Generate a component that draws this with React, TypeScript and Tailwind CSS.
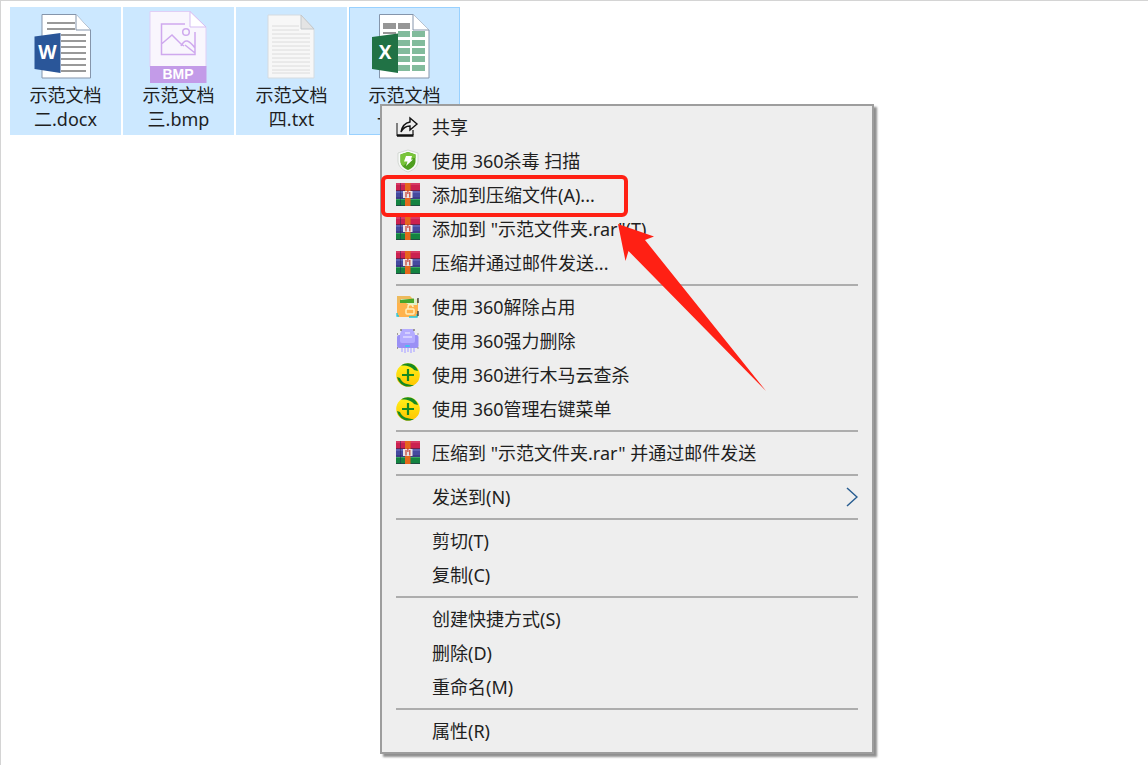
import type { ReactNode } from "react";

type DesktopFile = {
  name: string;
  icon: ReactNode;
  focused?: boolean;
};

type MenuItem = {
  label: string;
  icon?: ReactNode;
  submenu?: boolean;
  highlighted?: boolean;
};

function WordIcon() {
  return (
    <svg viewBox="0 0 72 72" className="size-[72px]" aria-hidden="true">
      <path d="M12 3.500H46L60.500 19V67H12Z" fill="#fff" stroke="#8595ab" />
      <path d="M46 3.500V19H60.500" fill="#fff" stroke="#8595ab" />
      <path
        d="M17 12H45M17 18H45M31 24H56M31 30H56M31 36H56M31 42H56M31 48H56M31 54H56M31 60H56"
        stroke="#999"
        strokeWidth="2"
      />
      <path d="M4.500 25.500L30.500 22V62L4.500 58Z" fill="#2a5699" />
      <text x="17.500" y="48" textAnchor="middle" fill="#fff" fontSize="19" fontWeight="700" fontFamily="Open Sans, sans-serif">
        W
      </text>
    </svg>
  );
}

function BmpIcon() {
  return (
    <svg viewBox="0 0 72 72" className="size-[72px]" aria-hidden="true">
      <path d="M7 .5H47L63 16V56H7Z" fill="#f9f6fd" stroke="#e0cff6" />
      <path d="M47 .5V16H63Z" fill="#fff" stroke="#d5bdf3" />
      <rect x="7" y="55" width="56.500" height="17" fill="#c39be8" />
      <path
        d="M42 13H18.500V43.500H52V21M18.500 33L29 24L38 33L41 35M38 35C42 27 46 29 52 37M42 34L52 42"
        fill="none"
        stroke="#cfa9ee"
        strokeWidth="1.500"
      />
      <circle cx="43" cy="21" r="3.300" fill="none" stroke="#cfa9ee" strokeWidth="1.500" />
      <text x="35" y="68" textAnchor="middle" fill="#fff" fontSize="14" fontWeight="700" fontFamily="Liberation Sans, sans-serif">
        BMP
      </text>
    </svg>
  );
}

function TextIcon() {
  return (
    <svg viewBox="0 0 72 72" className="size-[72px]" aria-hidden="true">
      <path d="M12 4H45L58 18V67H12Z" fill="#f7f7f7" stroke="#d5dbe0" />
      <path
        d="M16 15H43M16 19H43M16 23H54M16 27H54M16 31H54M16 35H54M16 39H54M16 43H54M16 47H54M16 51H54M16 55H54M16 59H54M16 62H54"
        stroke="#dcdcdc"
      />
      <path d="M45 4V18H58Z" fill="#e4e4e4" stroke="#c3c8cc" />
    </svg>
  );
}

function ExcelIcon() {
  return (
    <svg viewBox="0 0 72 72" className="size-[72px]" aria-hidden="true">
      <path d="M10.500 3.500H44L60 19V67H10.500Z" fill="#fff" stroke="#8595ab" />
      <path d="M44 3.500V19H60" fill="#fff" stroke="#8595ab" />
      <path d="M14 15H27M29 15H41" stroke="#969696" strokeWidth="6" />
      <path d="M14 22H27" stroke="#969696" strokeWidth="2" />
      <path
        d="M29 23H41M43 23H56M29 32H41M43 32H56M29 40H41M43 40H56M29 48H41M43 48H56M29 57H41M43 57H56"
        stroke="#82bb9c"
        strokeWidth="6"
      />
      <path d="M3 26L29 22.500V62L3 58Z" fill="#207245" />
      <text x="16" y="48" textAnchor="middle" fill="#fff" fontSize="19" fontWeight="700" fontFamily="Open Sans, sans-serif">
        X
      </text>
    </svg>
  );
}

function ShareIcon() {
  return (
    <svg viewBox="0 0 24 24" className="size-6" fill="none" stroke="#111" aria-hidden="true">
      <path d="M1 8V21" strokeWidth="1" />
      <path d="M1 20.500H17.500" strokeWidth="2.500" />
      <path d="M17 20V15" strokeWidth="1.200" />
      <path d="M5 17C6 11 9 8 14 7V3L21 9L14 15V11C10 11 7 13 5 17Z" strokeWidth="1.400" />
    </svg>
  );
}

function ShieldIcon() {
  return (
    <svg viewBox="0 0 24 24" className="size-6" aria-hidden="true">
      <path d="M12 1L22 4V12C22 17 18 21 12 23C6 21 2 17 2 12V4Z" fill="#f8faf8" stroke="#c6cbc6" strokeWidth=".7" />
      <path d="M12 3L19.500 5.500V12C19.500 16 17 19 12 21C7 19 4.500 16 4.500 12V5.500Z" fill="#4f9f20" />
      <path d="M12 3L19.500 5.500V9C15 8 11 14 7 17C5 15 4.500 14 4.500 12V5.500Z" fill="#79c43a" />
      <path d="M10 7H16L15 10.500H17L10 17L11.500 12.500H8Z" fill="#fff" />
    </svg>
  );
}

function RarIcon() {
  return (
    <svg viewBox="0 0 24 24" className="size-6" aria-hidden="true">
      <rect width="24" height="8" fill="#cb2150" />
      <rect y="8" width="24" height="8" fill="#454a9f" />
      <rect y="16" width="24" height="7" fill="#148341" />
      <path d="M0 1H24" stroke="#e35378" />
      <path d="M0 9H24" stroke="#747bc9" />
      <path d="M0 16.500H24" stroke="#38a762" />
      <path d="M0 7.500H24M0 15H24M0 22.500H24" stroke="#292342" strokeOpacity=".55" />
      <path d="M4.500 0V23" stroke="#1f2355" strokeOpacity=".45" />
      <rect x="9" width="5.500" height="23" fill="#e5681d" />
      <rect x="7" y="8" width="9.500" height="7" fill="#e9e4e8" />
      <path d="M10 9V14.500M13.800 9V14.500M11.900 7V11" stroke="#c63c30" strokeWidth="1.200" fill="none" />
    </svg>
  );
}

function FolderUnlockIcon() {
  return (
    <svg viewBox="0 0 24 24" className="size-6" aria-hidden="true">
      <path d="M1 1H14L17 4H22V22H2L1 20Z" fill="#edba5d" />
      <path d="M5 4H21V10H5Z" fill="#dff1cb" />
      <path d="M4 5L18 3.500V8H4Z" fill="#48a62c" />
      <path d="M1 8H10L13 10H22V22H2L1 20Z" fill="#ffb24c" />
      <path d="M1 18V21H3M21 19V22H13" fill="none" stroke="#20c7df" strokeWidth="1.300" />
      <path d="M22 3V8M22 16V21" stroke="#282828" strokeWidth="1.200" />
      <path d="M12 14V12A2.500 2.500 0 0 1 17 12" fill="none" stroke="#fff0bc" strokeWidth="1.500" />
      <rect x="10" y="14" width="8" height="5" rx="1" fill="none" stroke="#fff0bc" strokeWidth="1.500" />
    </svg>
  );
}

function ShredderIcon() {
  return (
    <svg viewBox="0 0 24 24" className="size-6" aria-hidden="true">
      <rect x="1" y="6" width="21.500" height="13" rx="2" fill="#9a90f5" />
      <path d="M6 0H17L19 5V12Q19 14 17 14H6Q4 14 4 12V5Z" fill="#b4acff" />
      <path d="M9 4H14M7 8H16" stroke="#dedaff" strokeWidth="1.500" />
      <rect x="9" y="16" width="5" height="2" rx="1" fill="#43bef2" />
      <path d="M6 19V23M9 19V24M12 19V23M15 19V24M18 19V23" stroke="#bcb6ff" strokeWidth="1.500" />
      <path d="M1 5H2M4 1H6M17 1H19M21.500 5H22.500M1 19H2M21.500 19H22.500" stroke="#524a3d" />
    </svg>
  );
}

function SafeguardIcon() {
  return (
    <svg viewBox="0 0 24 24" className="size-6" aria-hidden="true">
      <defs>
        <linearGradient id="safeguard" x2="0" y2="1">
          <stop stopColor="#fff21a" />
          <stop offset="1" stopColor="#ffc400" />
        </linearGradient>
      </defs>
      <circle cx="12" cy="12" r="11.800" fill="url(#safeguard)" />
      <path d="M5 2.500C12-2 20 1 22 8L18 7C16 4 11 2 5 2.500Z" fill="#168a22" />
      <path d="M1 14L4 15C6 20 11 22 18 22C11 26 3 22 1 14Z" fill="#168a22" />
      <path d="M12 6V18M6 12H18" stroke="#168a22" strokeWidth="2.200" />
    </svg>
  );
}

const files: DesktopFile[] = [
  { name: "示范文档二.docx", icon: <WordIcon /> },
  { name: "示范文档三.bmp", icon: <BmpIcon /> },
  { name: "示范文档四.txt", icon: <TextIcon /> },
  { name: "示范文档一.xlsx", icon: <ExcelIcon />, focused: true },
];

const menuGroups: MenuItem[][] = [
  [
    { label: "共享", icon: <ShareIcon /> },
    { label: "使用 360杀毒 扫描", icon: <ShieldIcon /> },
    { label: "添加到压缩文件(A)...", icon: <RarIcon />, highlighted: true },
    { label: '添加到 "示范文件夹.rar"(T)', icon: <RarIcon /> },
    { label: "压缩并通过邮件发送...", icon: <RarIcon /> },
  ],
  [
    { label: "使用 360解除占用", icon: <FolderUnlockIcon /> },
    { label: "使用 360强力删除", icon: <ShredderIcon /> },
    { label: "使用 360进行木马云查杀", icon: <SafeguardIcon /> },
    { label: "使用 360管理右键菜单", icon: <SafeguardIcon /> },
  ],
  [{ label: '压缩到 "示范文件夹.rar" 并通过邮件发送', icon: <RarIcon /> }],
  [{ label: "发送到(N)", submenu: true }],
  [{ label: "剪切(T)" }, { label: "复制(C)" }],
  [{ label: "创建快捷方式(S)" }, { label: "删除(D)" }, { label: "重命名(M)" }],
  [{ label: "属性(R)" }],
];

function FileTile({ file }: { file: DesktopFile }) {
  return (
    <button
      type="button"
      className={`flex w-[111px] flex-col items-center border bg-[#cce8ff] px-4 py-[3px] ${
        file.focused ? "border-[#99d1ff]" : "border-[#cce8ff]"
      }`}
    >
      {file.icon}
      <span className="w-[74px] text-center leading-6 break-all">{file.name}</span>
    </button>
  );
}

function MenuRow({ item }: { item: MenuItem }) {
  return (
    <li role="none" className="relative">
      <button type="button" role="menuitem" className="flex h-[34px] w-full items-center gap-3 px-[14px] text-left">
        <span className="size-6 shrink-0">{item.icon}</span>
        <span className="flex-1 whitespace-nowrap">{item.label}</span>
        {item.submenu && (
          <svg viewBox="0 0 12 20" className="h-5 w-3" fill="none" stroke="#285d91" strokeWidth="1.500" aria-hidden="true">
            <path d="M1 1L11 10L1 19" />
          </svg>
        )}
      </button>
      {item.highlighted && (
        <span className="pointer-events-none absolute -top-[3px] -left-px h-[42px] w-[247px] rounded-md border-4 border-[#ff2014]" />
      )}
    </li>
  );
}

function ContextMenu() {
  return (
    <div
      role="menu"
      className="absolute top-[103px] left-[379px] min-w-[494px] border-2 border-[#9d9d9d] bg-[#eee] py-1 shadow-[3px_3px_2px_#00000070]"
    >
      {menuGroups.map((group, index) => (
        <ul
          key={index}
          role="group"
          className={index > 0 ? "before:mx-[14px] before:my-1 before:block before:h-[2px] before:bg-[#adadad]" : ""}
        >
          {group.map((item) => (
            <MenuRow key={item.label} item={item} />
          ))}
        </ul>
      ))}
    </div>
  );
}

function PointerArrow() {
  return (
    <svg
      viewBox="0 0 150 170"
      className="pointer-events-none absolute top-[222px] left-[616px] h-[170px] w-[150px]"
      aria-hidden="true"
    >
      <path d="M1 1L37 13.500L28 17L149 168L11.500 28L8.500 38Z" fill="#ff2014" />
    </svg>
  );
}

export default function App() {
  return (
    <main className="relative min-h-screen border-t border-l border-[#d4d4d4] bg-white font-['Noto_Sans','Noto_Sans_CJK_SC',sans-serif] text-lg text-[#1f1f1f]">
      <div className="flex flex-wrap items-start gap-[2px] pt-[6px] pl-[9px]">
        {files.map((file) => (
          <FileTile key={file.name} file={file} />
        ))}
      </div>
      <ContextMenu />
      <PointerArrow />
    </main>
  );
}
